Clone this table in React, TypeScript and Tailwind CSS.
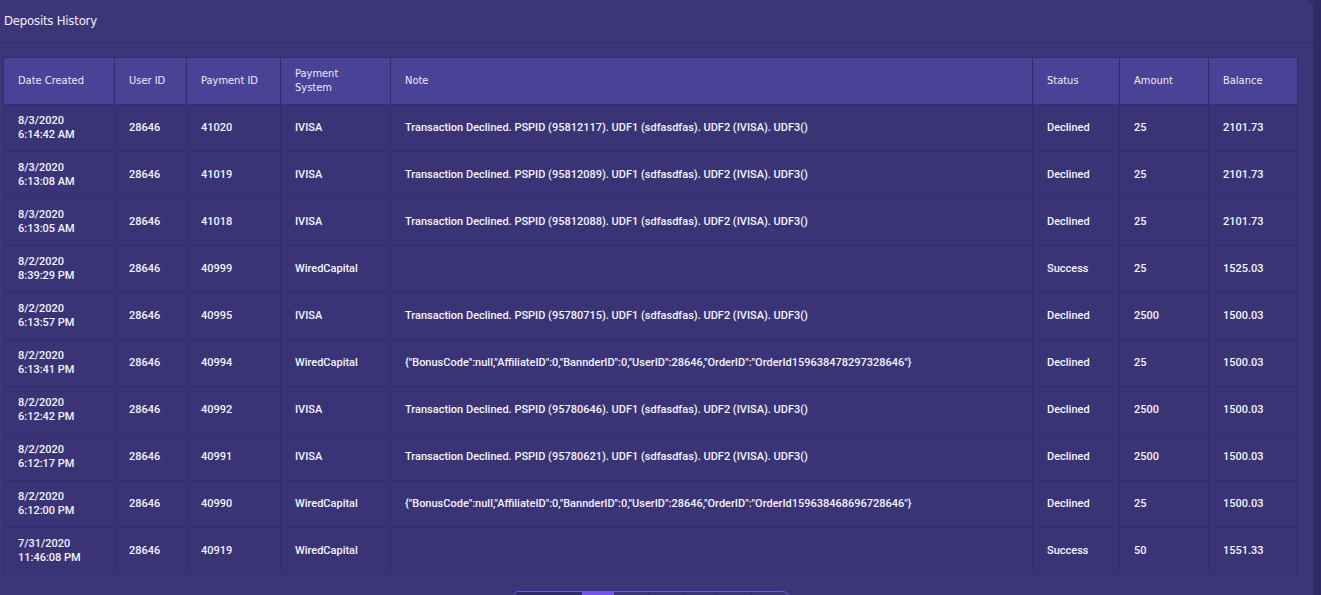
import React from "react";

const rows = [
  ["8/3/2020", "6:14:42 AM", "28646", "41020", "IVISA", "Transaction Declined. PSPID (95812117). UDF1 (sdfasdfas). UDF2 (IVISA). UDF3()", "Declined", "25", "2101.73"],
  ["8/3/2020", "6:13:08 AM", "28646", "41019", "IVISA", "Transaction Declined. PSPID (95812089). UDF1 (sdfasdfas). UDF2 (IVISA). UDF3()", "Declined", "25", "2101.73"],
  ["8/3/2020", "6:13:05 AM", "28646", "41018", "IVISA", "Transaction Declined. PSPID (95812088). UDF1 (sdfasdfas). UDF2 (IVISA). UDF3()", "Declined", "25", "2101.73"],
  ["8/2/2020", "8:39:29 PM", "28646", "40999", "WiredCapital", "", "Success", "25", "1525.03"],
  ["8/2/2020", "6:13:57 PM", "28646", "40995", "IVISA", "Transaction Declined. PSPID (95780715). UDF1 (sdfasdfas). UDF2 (IVISA). UDF3()", "Declined", "2500", "1500.03"],
  ["8/2/2020", "6:13:41 PM", "28646", "40994", "WiredCapital", '{"BonusCode":null,"AffiliateID":0,"BannderID":0,"UserID":28646,"OrderID":"OrderId159638478297328646"}', "Declined", "25", "1500.03"],
  ["8/2/2020", "6:12:42 PM", "28646", "40992", "IVISA", "Transaction Declined. PSPID (95780646). UDF1 (sdfasdfas). UDF2 (IVISA). UDF3()", "Declined", "2500", "1500.03"],
  ["8/2/2020", "6:12:17 PM", "28646", "40991", "IVISA", "Transaction Declined. PSPID (95780621). UDF1 (sdfasdfas). UDF2 (IVISA). UDF3()", "Declined", "2500", "1500.03"],
  ["8/2/2020", "6:12:00 PM", "28646", "40990", "WiredCapital", '{"BonusCode":null,"AffiliateID":0,"BannderID":0,"UserID":28646,"OrderID":"OrderId159638468696728646"}', "Declined", "25", "1500.03"],
  ["7/31/2020", "11:46:08 PM", "28646", "40919", "WiredCapital", "", "Success", "50", "1551.33"],
];

const widths = ["w-[111px]", "w-[72px]", "w-[94px]", "w-[110px]", "w-[642px]", "w-[87px]", "w-[89px]", "w-[89px]"];

const headFont = { fontFamily: "'DejaVu Sans Condensed', 'DejaVu Sans', sans-serif" };

export default function App() {
  return (
    <div className="w-[1321px] h-[595px] overflow-hidden bg-[#2f2966] flex" style={{ fontFamily: "Roboto, 'Liberation Sans', sans-serif" }}>
      <div className="w-[1313px] h-full bg-[#3c3679] rounded-tr-[6px] flex flex-col">
        <div className="h-[43px] shrink-0 border-b border-[#332d6e] flex items-center pl-[4px] pb-[1px]">
          <span className="text-[13px] text-[#f1f0fa] tracking-[-0.2px]" style={headFont}>
            Deposits History
          </span>
        </div>
        <div className="pl-[3px] pt-[14px]">
          <table className="border-collapse table-fixed w-[1295px]">
            <thead>
              <tr className="h-[47px] bg-[#4a4296]">
                {["Date Created", "User ID", "Payment ID", "Payment System", "Note", "Status", "Amount", "Balance"].map((h, i) => (
                  <th
                    key={h}
                    className={`${widths[i]} border border-[#332c72] text-left align-middle px-[14px] text-[11px] font-normal leading-[14px] text-[#ecebfa]`}
                    style={headFont}
                  >
                    {h === "Payment System" ? (
                      <>
                        Payment
                        <br />
                        System
                      </>
                    ) : (
                      h
                    )}
                  </th>
                ))}
              </tr>
            </thead>
            <tbody>
              {rows.map((r, idx) => (
                <tr key={idx} className="h-[47px] bg-[#3a3477]">
                  <td className="border border-[#332c6e] px-[14px] text-[11px] font-medium leading-[14px] text-[#f4f3fb] align-middle">
                    {r[0]}
                    <br />
                    {r[1]}
                  </td>
                  {r.slice(2).map((c, j) => (
                    <td
                      key={j}
                      className="border border-[#332c6e] px-[14px] text-[11px] font-medium leading-[14px] text-[#f4f3fb] align-middle whitespace-nowrap"
                    >
                      {c}
                    </td>
                  ))}
                </tr>
              ))}
            </tbody>
          </table>
        </div>
        <div className="flex justify-center mt-[16px] pr-[12px]">
          <div className="w-[276px] h-[20px] rounded-t-[6px] border border-[#7256ee] bg-[#3a3477] flex overflow-hidden">
            <div className="w-[34px] bg-[#2f2a66] border-r border-[#332c6e]" />
            <div className="w-[34px] bg-[#2f2a66] border-r border-[#332c6e]" />
            <div className="w-[32px] bg-[#7256ee]" />
            <div className="w-[35px] border-r border-[#332c6e]" />
            <div className="w-[35px] border-r border-[#332c6e]" />
            <div className="w-[34px] border-r border-[#332c6e]" />
            <div className="w-[34px] border-r border-[#332c6e]" />
          </div>
        </div>
      </div>
    </div>
  );
}
